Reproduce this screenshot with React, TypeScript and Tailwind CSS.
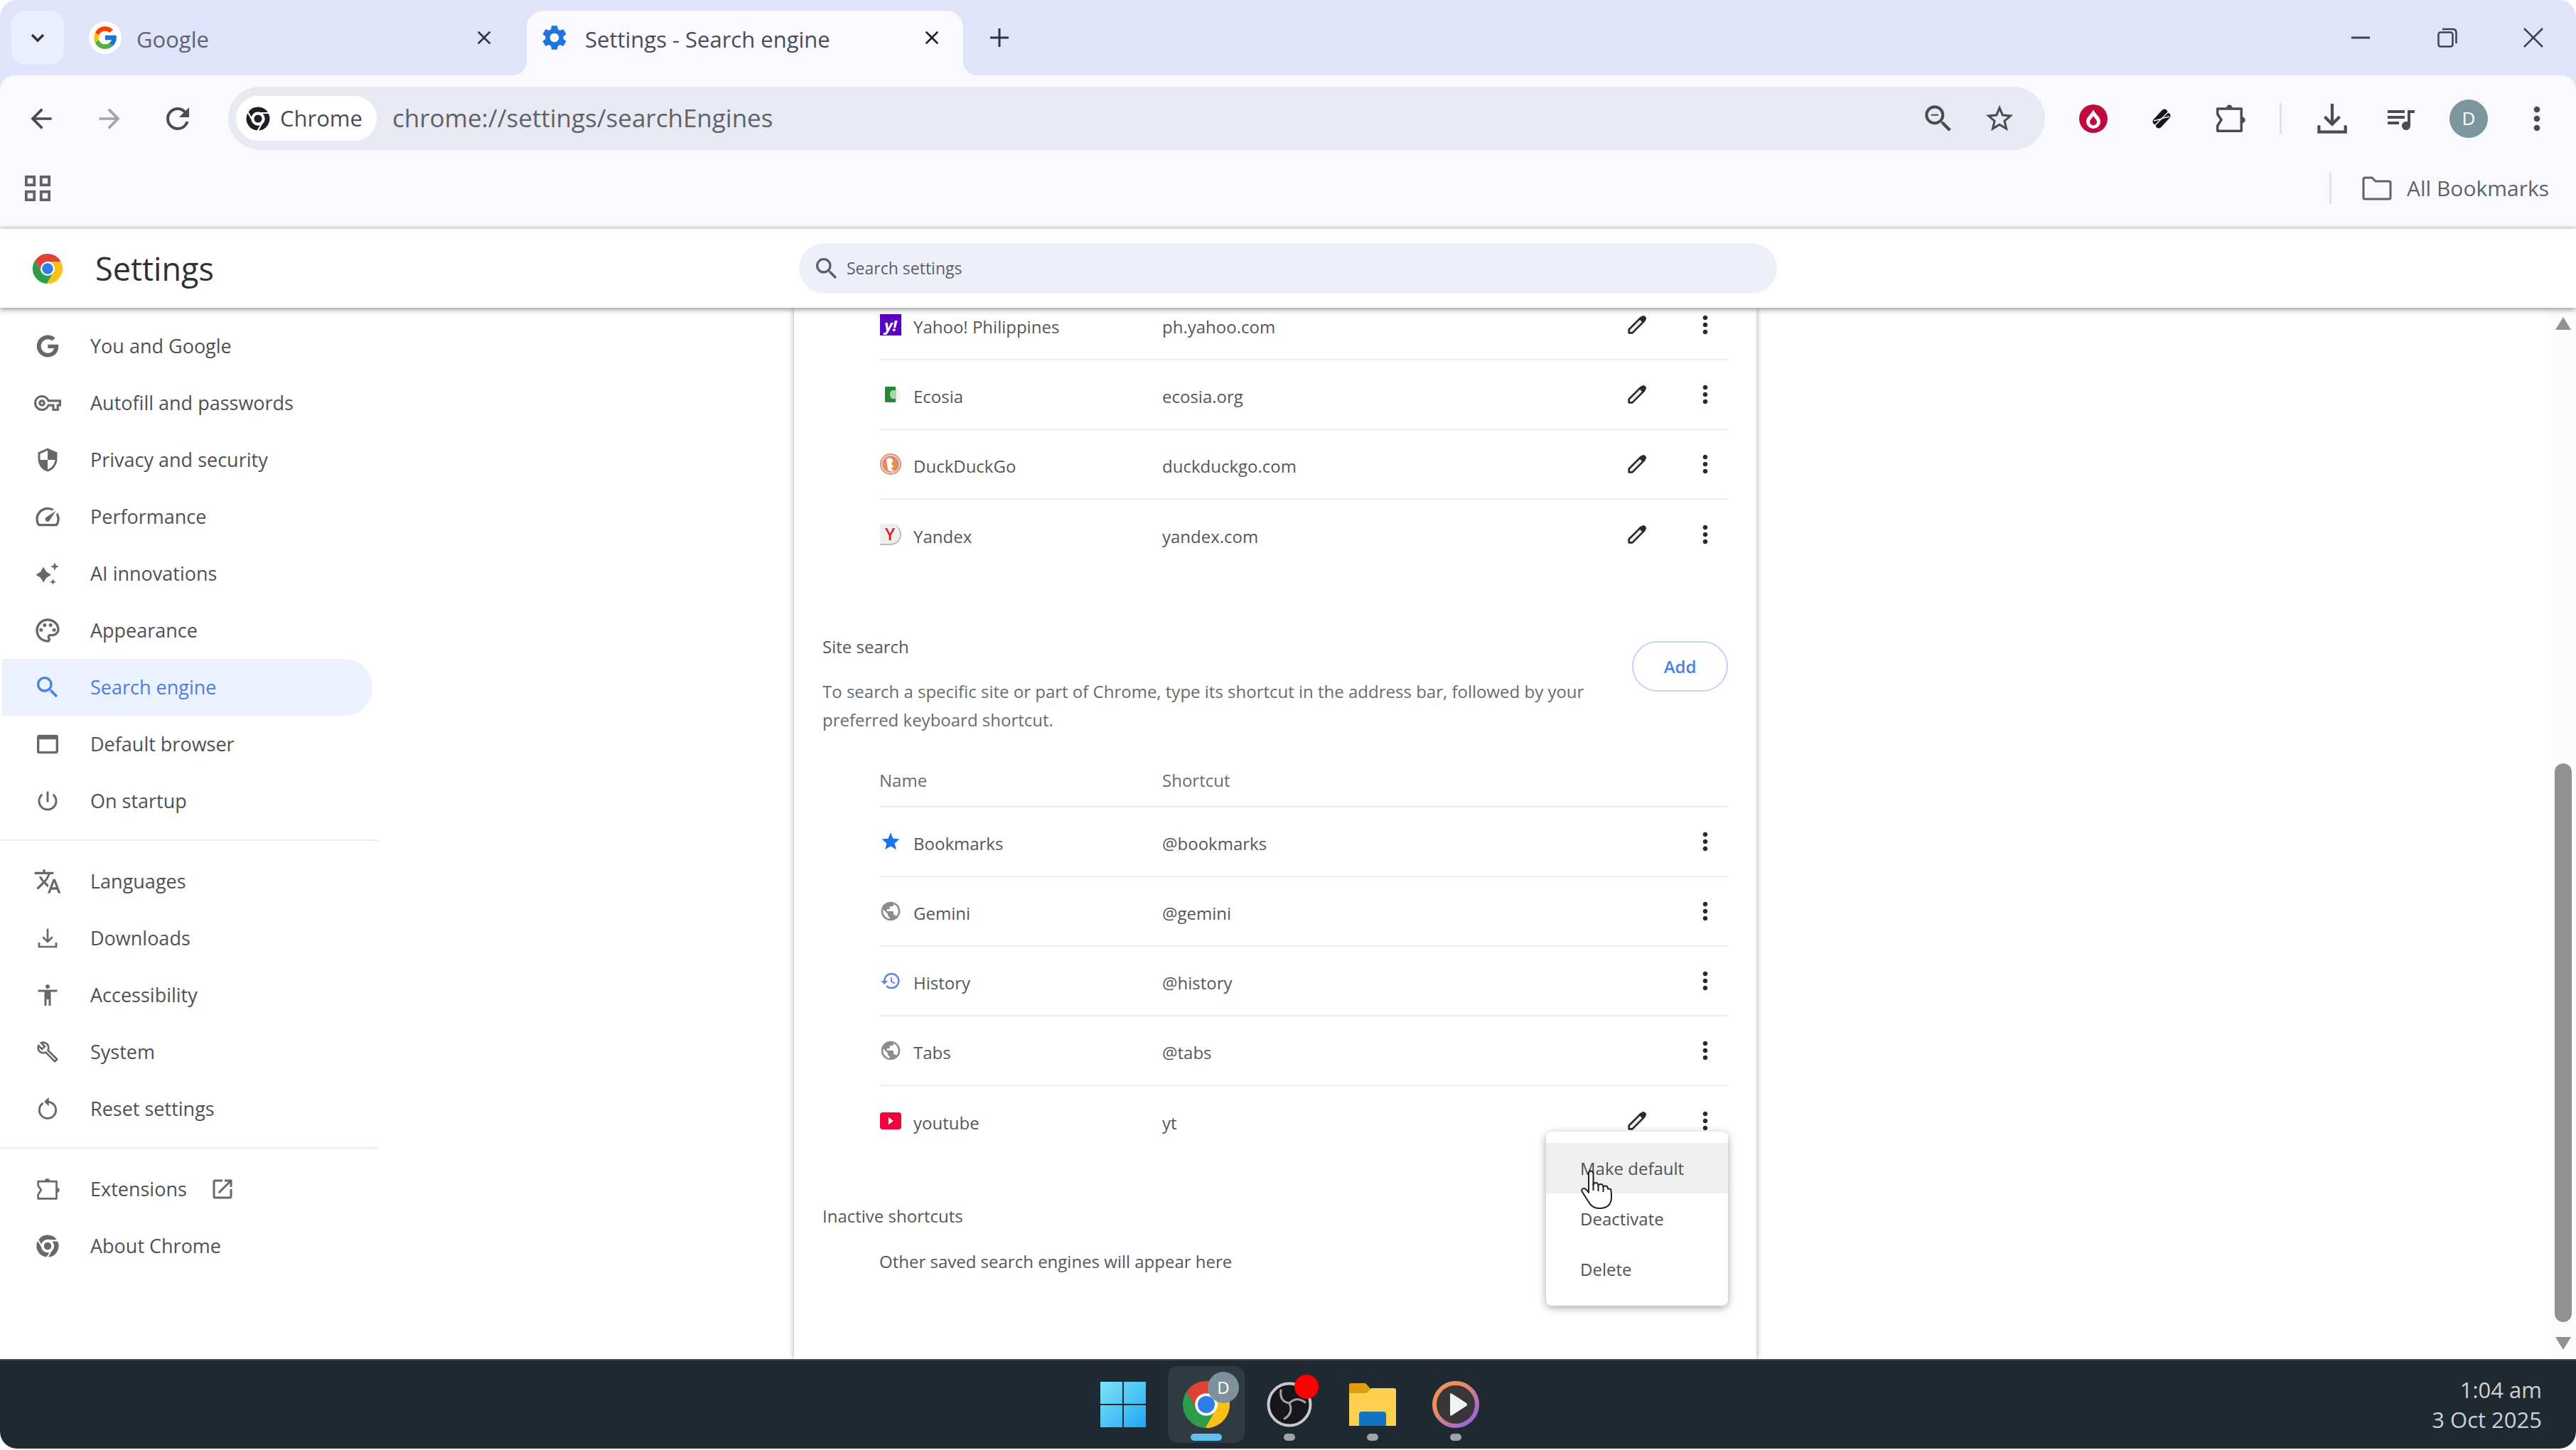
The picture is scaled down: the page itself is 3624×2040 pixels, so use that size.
/**
 * App.tsx
 * Browser window on the "Search engine" settings page,
 * with the row menu of the youtube shortcut open
 */
import type { ReactNode } from 'react'
import { FaGoogle } from 'react-icons/fa'
import { FcGoogle } from 'react-icons/fc'
import {
  MdAccessibility,
  MdArrowBack,
  MdArrowForward,
  MdClose,
  MdHistory,
  MdMoreVert,
  MdOpenInNew,
  MdOutlineBuild,
  MdOutlinePalette,
  MdOutlineSpeed,
  MdOutlineVpnKey,
  MdOutlineWebAsset,
  MdPowerSettingsNew,
  MdPublic,
  MdQueueMusic,
  MdRefresh,
  MdSearch,
  MdSecurity,
  MdSettings,
  MdStar,
  MdStarBorder,
  MdTranslate,
  MdZoomOut,
} from 'react-icons/md'

type IconProps = { className?: string }

/* ---------- icons ---------- */

const CHROME_RED = 'M5.54 12.03A22 22 0 0 1 43.6 14H24A10 10 0 0 0 15.34 29Z'
const CHROME_YELLOW = 'M43.6 14A22 22 0 0 1 22.86 45.97L32.66 29A10 10 0 0 0 24 14Z'
const CHROME_GREEN = 'M22.86 45.97A22 22 0 0 1 5.54 12.03L15.34 29A10 10 0 0 0 32.66 29Z'

const ChromeLogo = ({ className }: IconProps) => (
  <svg viewBox="0 0 48 48" className={className} aria-hidden="true">
    <path d={CHROME_RED} fill="#e04335" />
    <path d={CHROME_YELLOW} fill="#fbc116" />
    <path d={CHROME_GREEN} fill="#2d9c4b" />
    <circle cx="24" cy="24" r="10.5" fill="#fff" />
    <circle cx="24" cy="24" r="8" fill="#2f7de9" />
  </svg>
)

const ChromeMono = ({ className }: IconProps) => (
  <svg viewBox="0 0 48 48" className={className} aria-hidden="true">
    <g fill="currentColor" stroke="#fff" strokeWidth="2.5">
      <path d={CHROME_RED} />
      <path d={CHROME_YELLOW} />
      <path d={CHROME_GREEN} />
      <circle cx="24" cy="24" r="11" fill="#fff" />
    </g>
    <circle cx="24" cy="24" r="7" fill="currentColor" />
  </svg>
)

const PuzzleIcon = ({ className }: IconProps) => (
  <svg viewBox="0 0 24 24" className={className} aria-hidden="true">
    <path
      d="M4 5.500H19.500V20H4V16.500L6.500 12.800 4 9Z"
      fill="none"
      stroke="currentColor"
      strokeWidth="1.600"
      strokeLinejoin="round"
    />
    <path d="M9.700 5a2 2 0 0 1 4 0ZM20 10.800a2 2 0 0 1 0 4Z" fill="currentColor" />
  </svg>
)

const DownloadIcon = ({ className }: IconProps) => (
  <svg viewBox="0 0 24 24" className={className} aria-hidden="true">
    <path
      d="M12 3V15M7.5 10.8 12 15.3l4.500-4.500M4 16v4h16v-4"
      fill="none"
      stroke="currentColor"
      strokeWidth="1.8"
    />
  </svg>
)

const SparkIcon = ({ className }: IconProps) => (
  <svg viewBox="0 0 24 24" className={className} aria-hidden="true">
    <path
      d="M8.500 6.500 11 10.500 15 13 11 15.500 8.500 19.500 6 15.500 2 13 6 10.500ZM18 2.500l1 2.500 2.500 1-2.500 1-1 2.500-1-2.500-2.500-1 2.500-1ZM16.500 16.500l.8 1.700 1.700.8-1.700.8-.8 1.700-.8-1.700-1.700-.8 1.700-.8Z"
      fill="currentColor"
    />
  </svg>
)

const ResetIcon = ({ className }: IconProps) => (
  <svg viewBox="0 0 24 24" className={className} aria-hidden="true">
    <path
      d="M8.200 7.200A7 7 0 1 0 15.800 7.200 7 7 0 0 0 12 6.100"
      fill="none"
      stroke="currentColor"
      strokeWidth="1.7"
    />
    <path d="M13 2.300V9.700L9 6Z" fill="currentColor" />
  </svg>
)

const PencilIcon = ({ className }: IconProps) => (
  <svg viewBox="0 0 24 24" className={className} aria-hidden="true">
    <path
      d="M3.500 20.500v-3.600L16.200 4.200l3.600 3.600L7.100 20.500Z"
      fill="#eee"
      stroke="currentColor"
      strokeWidth="2"
      strokeLinejoin="round"
    />
    <path d="M14.300 6 17.700 2.500Q19 1.700 20.200 2.800l1.100 1.200Q22.300 5.100 21.500 6.300L18 9.700Z" fill="currentColor" />
  </svg>
)

const AppsIcon = ({ className }: IconProps) => (
  <svg viewBox="0 0 20 20" className={className} fill="none" stroke="currentColor" strokeWidth="2" aria-hidden="true">
    <rect x="1.500" y="1.500" width="6" height="6" />
    <rect x="12.500" y="1.500" width="6" height="6" />
    <rect x="1.500" y="12.500" width="6" height="6" />
    <rect x="12.500" y="12.500" width="6" height="6" />
  </svg>
)

const FolderIcon = ({ className }: IconProps) => (
  <svg viewBox="0 0 42 34" className={className} aria-hidden="true">
    <path
      d="M2 4Q2 2 4 2H14L19 7H38Q40 7 40 9V30Q40 32 38 32H4Q2 32 2 30Z"
      fill="none"
      stroke="currentColor"
      strokeWidth="3"
    />
  </svg>
)

const FlameIcon = ({ className }: IconProps) => (
  <svg viewBox="0 0 40 40" className={className} aria-hidden="true">
    <circle cx="20" cy="20" r="20" fill="#c0093f" />
    <path d="M20 7C22 13 30 17 30 24A10 10 0 0 1 10 24C10 17 18 13 20 7Z" fill="#fff" />
    <path d="M20 16C21 19 25 21 25 24.500A5 5 0 0 1 15 24.500C15 21 19 19 20 16Z" fill="#c0093f" />
  </svg>
)

const QuillIcon = ({ className }: IconProps) => (
  <svg viewBox="0 0 32 32" className={className} aria-hidden="true">
    <g stroke="#161616" strokeWidth="9" strokeLinecap="round">
      <path d="M8 20 20 7" />
      <path d="M12 25 24 12" />
    </g>
    <path d="M6 26 26 6M5 19 17 16M15 16 27 13" stroke="#f9f9ff" strokeWidth="1.500" />
  </svg>
)

const EcosiaIcon = () => (
  <svg viewBox="0 0 30 30" className="size-[30px]" aria-hidden="true">
    <circle cx="17" cy="15" r="12" fill="#eef7ee" />
    <rect x="7" y="4" width="15" height="22" rx="1" fill="#2b8738" />
    <path d="M23 9H18Q14 10 14 15T18 21H23Z" fill="#a9d4ad" />
  </svg>
)

const DuckIcon = () => (
  <svg viewBox="0 0 30 30" className="size-[30px]" aria-hidden="true">
    <circle cx="15" cy="15" r="15" fill="#e08a6b" />
    <circle cx="15" cy="15" r="12.500" fill="none" stroke="#fbe3d8" strokeWidth="1.500" />
    <path d="M9 8Q15 4 18 9L19 25Q13 26 11 22Z" fill="#fff" />
    <path d="M16 12 22 13Q23 16 17 17ZM16 19l6 2-5 3Z" fill="#d99a2b" />
  </svg>
)

const YouTubeIcon = () => (
  <svg viewBox="0 0 30 30" className="size-[30px]" aria-hidden="true">
    <rect x="0" y="3" width="30" height="24" rx="4" fill="#f5003c" />
    <path d="M12 10V20L19 15Z" fill="#fff" />
  </svg>
)

const HandCursor = ({ className }: IconProps) => (
  <svg viewBox="0 0 46 56" className={className} aria-hidden="true">
    <path
      d="M12 5Q12 1.500 15 1.500T18.500 5V21Q19 18 22 18T25.500 22Q26 20 29 20T32.500 24Q33 22 36 22.500T39 26.500L43 27Q44 30 44 38Q44 54 27 54Q17 54 12 45L3 31Q1 28 3.500 26.500T9 28L12 32Z"
      fill="#fff"
      stroke="#222"
      strokeWidth="2"
      strokeLinejoin="round"
    />
    <path d="M18.500 19V29M25.500 22V30M32.500 24V31" stroke="#222" strokeWidth="2" />
  </svg>
)

/* ---------- data ---------- */

type NavItem = { label: string; icon: ReactNode; active?: boolean; external?: boolean }

const NAV_GROUPS: NavItem[][] = [
  [
    { label: 'You and Google', icon: <FaGoogle className="size-8" /> },
    { label: 'Autofill and passwords', icon: <MdOutlineVpnKey className="size-[38px]" /> },
    { label: 'Privacy and security', icon: <MdSecurity className="size-9" /> },
    { label: 'Performance', icon: <MdOutlineSpeed className="size-10" /> },
    { label: 'AI innovations', icon: <SparkIcon className="size-10" /> },
    { label: 'Appearance', icon: <MdOutlinePalette className="size-10" /> },
    { label: 'Search engine', icon: <MdSearch className="size-10" />, active: true },
    { label: 'Default browser', icon: <MdOutlineWebAsset className="size-10" /> },
    { label: 'On startup', icon: <MdPowerSettingsNew className="size-9" /> },
  ],
  [
    { label: 'Languages', icon: <MdTranslate className="size-10" /> },
    { label: 'Downloads', icon: <DownloadIcon className="size-9" /> },
    { label: 'Accessibility', icon: <MdAccessibility className="size-9" /> },
    { label: 'System', icon: <MdOutlineBuild className="size-8" /> },
    { label: 'Reset settings', icon: <ResetIcon className="size-10" /> },
  ],
  [
    { label: 'Extensions', icon: <PuzzleIcon className="size-10" />, external: true },
    { label: 'About Chrome', icon: <ChromeMono className="size-9" /> },
  ],
]

type Engine = { name: string; shortcut: string; icon: ReactNode; editable?: boolean; menuOpen?: boolean }

const DEFAULT_ENGINES: Engine[] = [
  {
    name: 'Yahoo! Philippines',
    shortcut: 'ph.yahoo.com',
    editable: true,
    icon: (
      <span className="flex size-[30px] items-center justify-center bg-[#5c00c4] text-[22px] leading-none font-bold text-white italic">
        y!
      </span>
    ),
  },
  { name: 'Ecosia', shortcut: 'ecosia.org', editable: true, icon: <EcosiaIcon /> },
  { name: 'DuckDuckGo', shortcut: 'duckduckgo.com', editable: true, icon: <DuckIcon /> },
  {
    name: 'Yandex',
    shortcut: 'yandex.com',
    editable: true,
    icon: (
      <span className="flex size-[30px] items-center justify-center rounded-r-full border-r-2 border-b-2 border-[#bbb] bg-[#eee] text-[24px] leading-none font-semibold text-[#d8232f]">
        Y
      </span>
    ),
  },
]

const SITE_SHORTCUTS: Engine[] = [
  { name: 'Bookmarks', shortcut: '@bookmarks', icon: <MdStar className="size-[30px] text-[#1a73e8]" /> },
  { name: 'Gemini', shortcut: '@gemini', icon: <MdPublic className="size-8 text-[#8a8c90]" /> },
  { name: 'History', shortcut: '@history', icon: <MdHistory className="size-[30px] text-[#5a85e0]" /> },
  { name: 'Tabs', shortcut: '@tabs', icon: <MdPublic className="size-8 text-[#8a8c90]" /> },
  { name: 'youtube', shortcut: 'yt', icon: <YouTubeIcon />, editable: true, menuOpen: true },
]

/* ---------- browser frame ---------- */

const TabStrip = () => (
  <div className="flex h-[106px] items-start bg-[#dfe4fa] pt-[15px] pl-4">
    <button aria-label="Search tabs" className="flex h-[76px] w-[74px] items-center justify-center rounded-[20px] bg-[#ebeefd]">
      <svg viewBox="0 0 20 14" className="w-5" fill="none" stroke="#333" strokeWidth="3.500" aria-hidden="true">
        <path d="M2 3l8 8 8-8" />
      </svg>
    </button>

    <div className="ml-[17px] flex h-[76px] w-[614px] items-center pr-6 pl-[18px] text-[#5f6270]">
      <span className="flex size-[46px] items-center justify-center rounded-full bg-white">
        <FcGoogle className="size-[38px]" />
      </span>
      <span className="ml-[21px] flex-1 pt-1 text-[31px]">Google</span>
      <button aria-label="Close Google tab">
        <MdClose className="size-8 text-[#33343a]" />
      </button>
    </div>

    <div className="relative ml-5 h-[91px] w-[614px] rounded-t-[24px] bg-[#f9f9ff]">
      <svg viewBox="0 0 20 20" className="absolute bottom-0 -left-5 size-5" aria-hidden="true">
        <path d="M20 0V20H0A20 20 0 0 0 20 0Z" fill="#f9f9ff" />
      </svg>
      <svg viewBox="0 0 20 20" className="absolute -right-5 bottom-0 size-5" aria-hidden="true">
        <path d="M0 0V20H20A20 20 0 0 1 0 0Z" fill="#f9f9ff" />
      </svg>
      <div className="flex h-[76px] items-center pr-7 pl-[18px] text-[#4a4c55]">
        <MdSettings className="size-[42px] text-[#1f74dd]" />
        <span className="ml-[22px] flex-1 pt-1 text-[31px]">Settings - Search engine</span>
        <button aria-label="Close Settings tab">
          <MdClose className="size-8 text-[#1f2024]" />
        </button>
      </div>
    </div>

    <button aria-label="New tab" className="ml-[37px] flex h-[76px] items-center">
      <svg viewBox="0 0 28 28" className="size-7" stroke="#33343a" strokeWidth="3" aria-hidden="true">
        <path d="M14 1V27M1 14H27" />
      </svg>
    </button>

    <div className="ml-auto flex h-[76px] items-center text-[#3d4150]">
      <button aria-label="Minimize" className="flex w-[122px] justify-center">
        <svg viewBox="0 0 28 28" className="size-7" stroke="currentColor" strokeWidth="3" aria-hidden="true">
          <path d="M1 14H27" />
        </svg>
      </button>
      <button aria-label="Restore" className="flex w-[122px] justify-center">
        <svg viewBox="0 0 28 28" className="size-7" fill="none" stroke="currentColor" strokeWidth="2.500" aria-hidden="true">
          <rect x="1.500" y="6.500" width="20" height="20" rx="3" />
          <path d="M7 2H22Q26.500 2 26.500 7V22" />
        </svg>
      </button>
      <button aria-label="Close window" className="flex w-[120px] justify-center">
        <svg viewBox="0 0 28 28" className="size-7" stroke="currentColor" strokeWidth="2.500" aria-hidden="true">
          <path d="M1 1L27 27M27 1L1 27" />
        </svg>
      </button>
    </div>
  </div>
)

const ToolButton = ({ label, children }: { label: string; children: ReactNode }) => (
  <button aria-label={label} className="flex h-full w-24 items-center justify-center">
    {children}
  </button>
)

const Toolbar = () => (
  <div className="bg-[#dfe4fa]">
    <div className="rounded-t-[20px] border-b-4 border-[#eff0f7] bg-[#f9f9ff] pt-4">
      <div className="flex h-[89px] items-center pr-[7px] pl-[10px] text-[#4a4c53]">
        <ToolButton label="Back">
          <MdArrowBack className="size-11" />
        </ToolButton>
        <ToolButton label="Forward">
          <MdArrowForward className="size-11 text-[#a4a5ac]" />
        </ToolButton>
        <ToolButton label="Reload">
          <MdRefresh className="size-12" />
        </ToolButton>

        <div className="ml-[23px] flex h-full flex-1 items-center rounded-full bg-[#e8eaf3] pr-[41px] pl-[11px]">
          <button className="flex h-[63px] items-center gap-3 rounded-full bg-white pr-5 pl-3">
            <ChromeMono className="size-[38px] text-[#1f2024]" />
            <span className="text-[31px]">Chrome</span>
          </button>
          <input
            aria-label="Address"
            defaultValue="chrome://settings/searchEngines"
            className="ml-[22px] min-w-0 flex-1 bg-transparent text-[35px] text-[#5f626b] outline-none"
          />
          <button aria-label="Zoom">
            <MdZoomOut className="size-[50px]" />
          </button>
          <button aria-label="Bookmark this tab" className="ml-[38px]">
            <MdStarBorder className="size-[46px]" />
          </button>
        </div>

        <div className="ml-5 flex h-full items-center">
          <ToolButton label="Ad blocker">
            <FlameIcon className="size-10" />
          </ToolButton>
          <ToolButton label="Writing assistant">
            <QuillIcon className="size-8" />
          </ToolButton>
          <ToolButton label="Extensions">
            <PuzzleIcon className="size-[52px]" />
          </ToolButton>
        </div>
        <div className="mr-[23px] ml-[22px] h-11 w-[3px] bg-[#d9e0fa]" />
        <ToolButton label="Downloads">
          <DownloadIcon className="size-[56px]" />
        </ToolButton>
        <ToolButton label="Media controls">
          <MdQueueMusic className="size-12" />
        </ToolButton>
        <ToolButton label="Profile">
          <span className="flex size-[54px] items-center justify-center rounded-full bg-[#7b979c] text-[26px] text-white">
            D
          </span>
        </ToolButton>
        <ToolButton label="Chrome menu">
          <MdMoreVert className="size-[52px]" />
        </ToolButton>
      </div>

      <div className="flex h-[107px] items-center pr-[38px] pl-[34px] text-[#5f626b]">
        <button aria-label="Apps">
          <AppsIcon className="size-[38px]" />
        </button>
        <div className="ml-auto h-11 w-[3px] bg-[#d9e0fa]" />
        <button className="ml-[43px] flex items-center gap-[21px] text-[30px]">
          <FolderIcon className="w-[42px]" />
          All Bookmarks
        </button>
      </div>
    </div>
  </div>
)

/* ---------- settings page ---------- */

const SettingsHeader = () => (
  <header className="relative z-10 flex h-[111px] items-center bg-white shadow-[0_2px_8px_rgba(0,0,0,0.45)]">
    <div className="flex-1">
      <div className="flex items-center gap-11 pl-11">
        <ChromeLogo className="size-[46px]" />
        <h1 className="text-[45px] text-[#303134]">Settings</h1>
      </div>
    </div>
    <label className="flex h-[71px] w-full max-w-[1376px] items-center rounded-full bg-[#eef0f9] pl-[19px] text-[#5c5e68]">
      <MdSearch className="size-10" />
      <input
        type="search"
        aria-label="Search settings"
        placeholder="Search settings"
        className="ml-2 flex-1 bg-transparent text-[23px] outline-none placeholder:text-[#5c5e68]"
      />
    </label>
    <div className="flex-1" />
  </header>
)

const SideNav = () => (
  <nav className="w-[532px] pt-[14px]">
    {NAV_GROUPS.map((group, i) => (
      <ul key={i} className={i > 0 ? 'mt-[14px] border-t-2 border-[#ececee] pt-[17px]' : ''}>
        {group.map((item) => (
          <li key={item.label}>
            <a
              href="#"
              className={`mr-2 ml-[3px] flex h-20 items-center rounded-r-full pl-11 text-[27px] ${
                item.active ? 'bg-[#ebf1fd] text-[#4b80e0]' : 'text-[#4f5154]'
              }`}
            >
              <span className={`mr-10 flex w-10 justify-center ${item.active ? '' : 'text-[#66686c]'}`}>{item.icon}</span>
              {item.label}
              {item.external && <MdOpenInNew className="ml-8 size-9 text-[#66686c]" />}
            </a>
          </li>
        ))}
      </ul>
    ))}
  </nav>
)

// Menu that hangs from the "more actions" button
const RowMenu = () => (
  <div role="menu" className="absolute top-16 right-0 z-10 w-64 rounded-[8px] bg-white py-4 shadow-[0_3px_12px_rgba(0,0,0,0.35)]">
    {['Make default', 'Deactivate', 'Delete'].map((label, i) => (
      <button
        key={label}
        role="menuitem"
        className={`flex h-[71px] w-full items-center pl-12 text-[24px] text-[#505154] ${i === 0 ? 'bg-[#efefef]' : ''}`}
      >
        {label}
      </button>
    ))}
    <HandCursor className="absolute top-[54px] left-[48px] w-[46px]" />
  </div>
)

const EngineTable = ({ label, rows, showHead }: { label: string; rows: Engine[]; showHead?: boolean }) => (
  <table aria-label={label} className="w-full table-fixed text-left text-[24px] text-[#55575a]">
    <colgroup>
      <col className="w-1/3" />
      <col />
      <col className="w-[200px]" />
    </colgroup>
    {showHead && (
      <thead className="text-[#6a6c70]">
        <tr className="h-[74px] border-b-2 border-[#ededee]">
          <th className="font-normal">Name</th>
          <th className="font-normal">Shortcut</th>
          <th aria-label="Actions" />
        </tr>
      </thead>
    )}
    <tbody>
      {rows.map((row) => (
        <tr key={row.name} className="h-[98px] border-b-2 border-[#ededee] last:border-b-0">
          <td>
            <div className="flex items-center">
              <span className="mr-4 flex w-8 justify-center">{row.icon}</span>
              <span className="pt-[6px]">{row.name}</span>
            </div>
          </td>
          <td className="pt-[6px]">{row.shortcut}</td>
          <td className="relative">
            <div className="flex items-center justify-end gap-12 pr-2 text-[#2a2a2a]">
              {row.editable && (
                <button aria-label={`Edit ${row.name}`} className="flex size-12 items-center justify-center">
                  <PencilIcon className="size-8" />
                </button>
              )}
              <button aria-label={`More actions for ${row.name}`} className="flex size-12 items-center justify-center">
                <MdMoreVert className="size-10" />
              </button>
            </div>
            {row.menuOpen && <RowMenu />}
          </td>
        </tr>
      ))}
    </tbody>
  </table>
)

const SearchEngines = () => (
  <main className="w-full max-w-[1354px] bg-white px-10 text-[24px] leading-10 text-[#55575a] shadow-[0_0_8px_rgba(0,0,0,0.35)]">
    {/* list is scrolled a little under the header */}
    <section className="-mt-[25px] pl-20">
      <EngineTable label="Search engines" rows={DEFAULT_ENGINES} />
    </section>

    <section className="mt-[90px]">
      <div className="flex items-start">
        <div className="flex-1">
          <h2>Site search</h2>
          <p className="mt-[23px] text-[#696b6f]">
            To search a specific site or part of Chrome, type its shortcut in the address bar, followed by your preferred
            keyboard shortcut.
          </p>
        </div>
        <button className="mt-3 ml-10 h-[71px] w-[135px] rounded-full border-2 border-[#c3d3f7] font-semibold text-[#4f7fdc]">
          Add
        </button>
      </div>
      <div className="mt-7 pl-20">
        <EngineTable label="Site search" rows={SITE_SHORTCUTS} showHead />
      </div>
    </section>

    <section className="mt-[66px] pb-10">
      <h2>Inactive shortcuts</h2>
      <p className="mt-6 pl-20">Other saved search engines will appear here</p>
    </section>
  </main>
)

const ScrollBar = () => (
  <div className="flex w-9 flex-col items-center bg-[#fcfcfc] py-3" aria-hidden="true">
    <svg viewBox="0 0 24 20" className="w-6" fill="#919191">
      <path d="M12 1L23 19H1Z" />
    </svg>
    <div className="flex-[610]" />
    <div className="w-6 flex-[787] rounded-full bg-[#919191]" />
    <svg viewBox="0 0 24 20" className="mt-5 w-6" fill="#919191">
      <path d="M12 19L1 1H23Z" />
    </svg>
  </div>
)

/* ---------- taskbar ---------- */

const TaskButton = ({ label, running, active, children }: { label: string; running?: boolean; active?: boolean; children: ReactNode }) => (
  <button
    aria-label={label}
    className={`relative flex h-[108px] w-[108px] items-center justify-center rounded-[14px] ${active ? 'bg-[#2f3a42]' : ''}`}
  >
    {children}
    {active && <span className="absolute bottom-[3px] h-[10px] w-11 rounded-full bg-[#62bdf0]" />}
    {running && <span className="absolute bottom-[3px] h-[10px] w-4 rounded-full bg-[#a0a4a8]" />}
  </button>
)

const Taskbar = () => (
  <footer className="grid h-[126px] grid-cols-[1fr_auto_1fr] items-center rounded-b-[24px] border-t-2 border-[#4a4d52] bg-[#1f2931] pr-12 pl-[52px]">
    <div />
    <div className="flex gap-[9px]">
      <TaskButton label="Start">
        <svg viewBox="0 0 66 66" className="size-[66px]" aria-hidden="true">
          <defs>
            <linearGradient id="win" x1="0" y1="0" x2="1" y2="1">
              <stop offset="0" stopColor="#7fe3f5" />
              <stop offset="1" stopColor="#1fa8f7" />
            </linearGradient>
          </defs>
          <path d="M1 1H32V32H1ZM34 1H65V32H34ZM1 34H32V65H1ZM34 34H65V65H34Z" fill="url(#win)" />
        </svg>
      </TaskButton>
      <TaskButton label="Google Chrome" active>
        <ChromeLogo className="size-[72px]" />
        <span className="absolute top-2 right-2 flex size-[44px] items-center justify-center rounded-full bg-[#7f919c] text-[24px] text-white">
          D
        </span>
      </TaskButton>
      <TaskButton label="OBS Studio" running>
        <svg viewBox="0 0 64 64" className="size-16" aria-hidden="true">
          <circle cx="32" cy="32" r="29.500" fill="#17161a" stroke="#c8c8cc" strokeWidth="4" />
          <g fill="none" stroke="#a4a4aa" strokeWidth="3" strokeLinecap="round">
            <path d="M32 30Q18 28 20 12" />
            <path d="M32 30Q42 20 54 29" />
            <path d="M32 30Q38 44 25 52" />
          </g>
        </svg>
        <span className="absolute top-3 right-[13px] size-[34px] rounded-full bg-[#ff0000]" />
      </TaskButton>
      <TaskButton label="File Explorer" running>
        <svg viewBox="0 0 68 64" className="w-[68px]" aria-hidden="true">
          <path d="M1 5Q1 2 4 2H24L32 11V22H1Z" fill="#dfa00f" />
          <path d="M1 16H26L32 9H64Q67 9 67 12V62H1Z" fill="#fdd04f" />
          <path d="M15 62V46Q15 42 19 42H49Q53 42 53 46V62Z" fill="#0f73bf" />
        </svg>
      </TaskButton>
      <TaskButton label="Media Player" running>
        <svg viewBox="0 0 68 68" className="size-[68px]" aria-hidden="true">
          <defs>
            <linearGradient id="ring" x1="0" y1="0" x2="1" y2="1">
              <stop offset="0.300" stopColor="#ee8f5c" />
              <stop offset="0.900" stopColor="#9a63dd" />
            </linearGradient>
          </defs>
          <circle cx="34" cy="34" r="30" fill="#393639" stroke="url(#ring)" strokeWidth="6" />
          <path d="M26 20Q26 17 29 19L49 32Q51 34 49 36L29 49Q26 51 26 48Z" fill="#f2f2f2" />
        </svg>
      </TaskButton>
    </div>
    <div className="text-right text-[31px] leading-[42px] text-[#ccd1d5]">
      <p>1:04 am</p>
      <p>3 Oct 2025</p>
    </div>
  </footer>
)

const App = () => (
  <div className="min-h-screen bg-white font-['Open_Sans','Noto_Sans',sans-serif]">
    <div className="flex min-h-screen flex-col overflow-hidden rounded-[24px] pb-[2px]">
      <TabStrip />
      <Toolbar />
      <SettingsHeader />
      <div className="flex flex-1 overflow-hidden bg-white">
        <div className="flex-1">
          <SideNav />
        </div>
        <SearchEngines />
        <div className="flex-1" />
        <ScrollBar />
      </div>
      <Taskbar />
    </div>
  </div>
)

export default App
